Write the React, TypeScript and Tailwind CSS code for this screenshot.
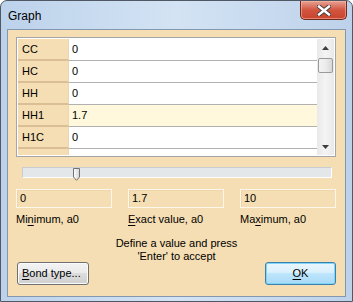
import React from 'react';

const ROWS = [
  { name: 'CC', value: '0' },
  { name: 'HC', value: '0' },
  { name: 'HH', value: '0' },
  { name: 'HH1', value: '1.7', selected: true },
  { name: 'H1C', value: '0' },
];

const FIELDS = [
  { value: '0', pre: 'Mi', key: 'n', post: 'imum, a0' },
  { value: '1.7', pre: '', key: 'E', post: 'xact value, a0' },
  { value: '10', pre: 'Ma', key: 'x', post: 'imum, a0' },
];

function CloseButton() {
  return (
    <div className="mr-[5px] flex h-[19px] w-[47px] items-center justify-center rounded-b-[5px] border border-t-0 border-[#6b2a1f] bg-gradient-to-b from-[#e6a194] via-[#d2543e] to-[#c8432c] shadow-[inset_0_0_0_1px_rgba(255,190,170,0.55)]">
      <svg width="14" height="11" viewBox="0 0 14 11">
        <path d="M2 1.5 L12 9.5 M12 1.5 L2 9.5" stroke="#3b3b3b" strokeWidth="4.2" strokeLinecap="square" />
        <path d="M2 1.5 L12 9.5 M12 1.5 L2 9.5" stroke="#ffffff" strokeWidth="2.4" strokeLinecap="square" />
      </svg>
    </div>
  );
}

function ScrollBar() {
  return (
    <div className="flex w-[17px] flex-col bg-gradient-to-r from-[#e9e9e9] via-[#f4f4f4] to-[#e9e9e9]">
      <div className="flex h-[17px] items-center justify-center">
        <svg width="7" height="4" viewBox="0 0 7 4">
          <path d="M3.5 0 L7 4 L0 4 Z" fill="#3e3e3e" />
        </svg>
      </div>
      <div className="mx-[1px] mt-[2px] h-[15px] rounded-[2px] border border-[#9a9a9a] bg-gradient-to-r from-[#f3f3f3] via-[#ececec] to-[#d8d8d8]" />
      <div className="flex-1" />
      <div className="flex h-[17px] items-center justify-center">
        <svg width="7" height="4" viewBox="0 0 7 4">
          <path d="M0 0 L7 0 L3.5 4 Z" fill="#3e3e3e" />
        </svg>
      </div>
    </div>
  );
}

function Grid() {
  return (
    <div className="ml-[8px] mt-[7px] flex h-[120px] w-[320px] border border-[#a5a5a5] bg-white p-[1px]">
      <div className="flex flex-1 flex-col overflow-hidden">
        {ROWS.map((r) => (
          <div key={r.name} className="flex h-[22px] shrink-0">
            <div className="flex w-[51px] items-center border-b-2 border-r border-b-[#d9bf93] border-r-[#e9d6b3] bg-[#f5deb3] pl-[4px]">
              {r.name}
            </div>
            <div className={`flex flex-1 items-center border-b border-[#b1b1b1] pl-[3px] ${r.selected ? 'bg-[#fff8dc]' : 'bg-white'}`}>
              {r.value}
            </div>
          </div>
        ))}
        <div className="flex flex-1">
          <div className="w-[51px] border-r border-[#e9d6b3] bg-[#f5deb3]" />
          <div className="flex-1 bg-white" />
        </div>
      </div>
      <ScrollBar />
    </div>
  );
}

function Slider() {
  return (
    <div className="relative ml-[14px] mt-[10px] h-[11px] w-[310px] border border-[#c9ccd0] border-b-white border-r-white bg-[#e4e7ea]">
      <svg className="absolute left-[50px] top-0" width="7" height="13" viewBox="0 0 7 13">
        <defs>
          <linearGradient id="th" x1="0" y1="0" x2="1" y2="0">
            <stop offset="0" stopColor="#ffffff" />
            <stop offset="1" stopColor="#d4d4d4" />
          </linearGradient>
        </defs>
        <path d="M0.5 0.5 H6.5 V9 L3.5 12.3 L0.5 9 Z" fill="url(#th)" stroke="#727272" />
      </svg>
    </div>
  );
}

export default function App() {
  return (
    <div
      className="flex h-[302px] w-[353px] flex-col overflow-hidden rounded-t-[7px] border border-[#4f5864] bg-gradient-to-r from-[#bcd2eb] via-[#d3e3f4] to-[#bdd2ea] text-[11px] text-black"
      style={{ fontFamily: '"Liberation Sans", Arial, sans-serif' }}
    >
      <div className="flex h-[28px] shrink-0 items-start justify-between">
        <span className="ml-[7px] mt-[6px] text-[12px] text-black">Graph</span>
        <CloseButton />
      </div>

      <div className="mx-[6px] flex h-[268px] shrink-0 flex-col border border-[#8398af] bg-[#f5deb3]">
        <Grid />
        <Slider />

        <div className="ml-[8px] mt-[11px] flex gap-[16px]">
          {FIELDS.map((f) => (
            <div key={f.post} className="w-[96px]">
              <div className="flex h-[19px] items-center border border-[#fdf6ea] pl-[3px] shadow-[inset_1px_1px_0_#efd6a9]">
                {f.value}
              </div>
              <div className="mt-[5px] leading-[13px]">
                {f.pre}
                <span className="underline underline-offset-[2px]">{f.key}</span>
                {f.post}
              </div>
            </div>
          ))}
        </div>

        <div className="mt-[11px] h-[25px] text-center leading-[13px]">
          Define a value and press
          <br />
          'Enter' to accept
        </div>

        <div className="mx-[9px] flex justify-between">
          <button className="block h-[23px] w-[72px] rounded-[3px] border border-[#707070] bg-[linear-gradient(#f3f3f3_0%,#ebebeb_45%,#dddddd_50%,#cfcfcf_100%)] pl-[4px] text-left leading-[21px] shadow-[inset_0_0_0_1px_#fbfbfb]">
            <span>
              <span className="underline underline-offset-[2px]">B</span>ond type...
            </span>
          </button>
          <button className="block h-[23px] w-[71px] rounded-[3px] border border-[#3c7fb1] bg-[linear-gradient(#eaf6fd_0%,#d9f0fc_45%,#bee6fd_50%,#a7d9f5_100%)] text-center leading-[21px] shadow-[inset_0_0_0_1px_#7fd6f6]">
            <span>
              <span className="underline underline-offset-[2px]">O</span>K
            </span>
          </button>
        </div>
      </div>
    </div>
  );
}
